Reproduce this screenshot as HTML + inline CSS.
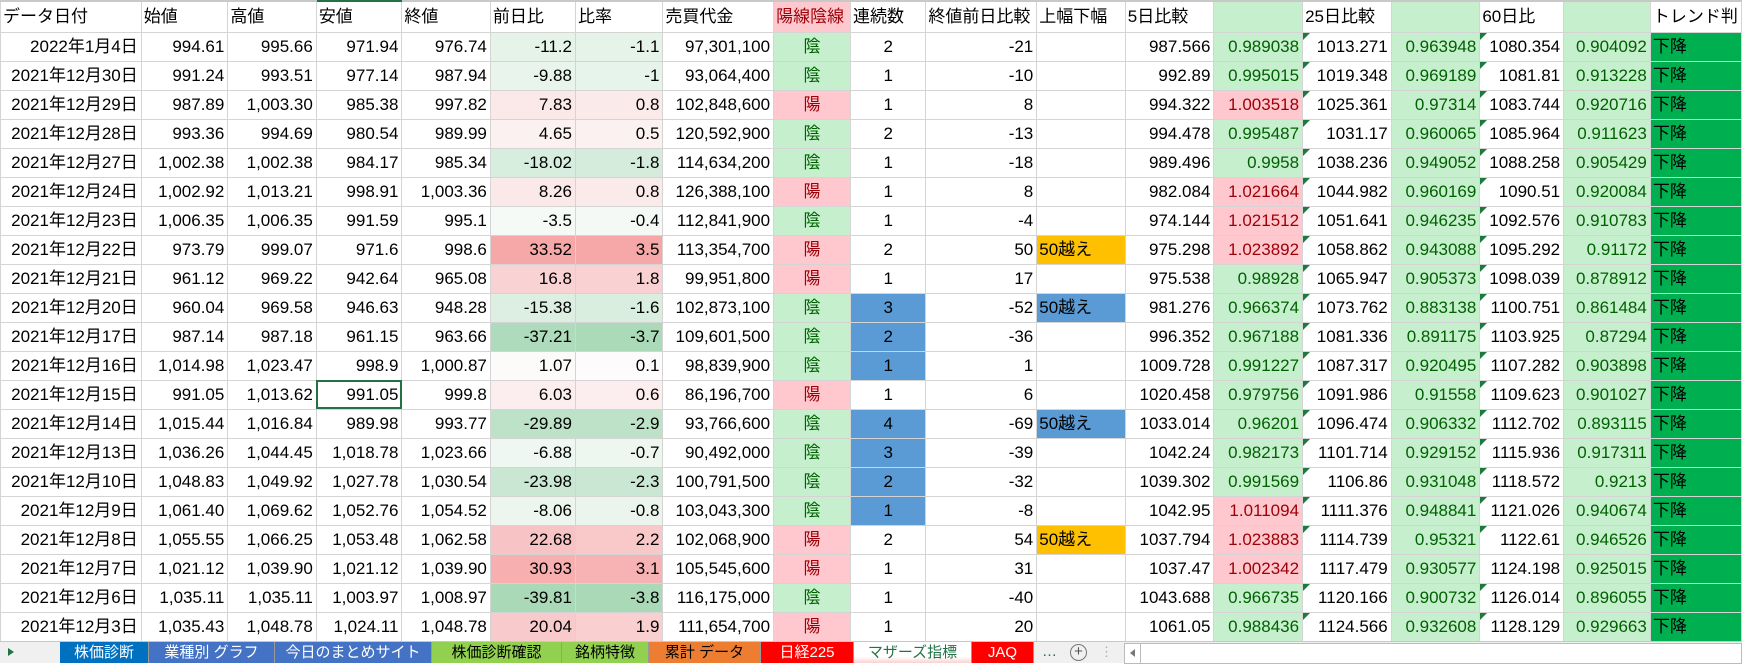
<!DOCTYPE html>
<html><head><meta charset="utf-8"><style>
*{margin:0;padding:0;box-sizing:border-box}
body{width:1742px;height:663px;overflow:hidden;background:#fff;font-family:"Liberation Sans","Noto Sans CJK JP",sans-serif;font-size:17px;color:#000;position:relative}
table{border-collapse:collapse;table-layout:fixed;position:absolute;left:0;top:0}
td{border:1px solid #d4d4d4;height:29px;white-space:nowrap;overflow:hidden;text-align:right;padding:0 3px;position:relative;line-height:27px}
tr.h td{height:31px;text-align:left;padding-left:2px;border-top:2px solid #c8c8c8}
.c{text-align:center}.l{text-align:left;padding-left:2px}
.n{background:#c6efce;color:#006100}
.y{background:#ffc7ce;color:#9c0006}
.b{background:#5b9bd5}
.o{background:#ffc000}
.s{background:#00b050;text-align:left;padding-left:2px}
.t::before{content:"";position:absolute;left:0;top:0;border-top:7px solid #1b7a3c;border-right:7px solid transparent}
.sel{outline:2px solid #217346;outline-offset:-2px}
#tabs{position:absolute;left:0;top:641px;width:1742px;height:22px;background:#f0f0f0;border-top:1px solid #c8c8c8}
.tab{position:absolute;top:0;height:21px;font-size:15px;line-height:21px;text-align:center;border-right:1px solid #9a9a9a}
</style></head><body>
<table>
<colgroup><col style="width:141px"><col style="width:87px"><col style="width:89px"><col style="width:86px"><col style="width:89px"><col style="width:86px"><col style="width:89px"><col style="width:111px"><col style="width:77px"><col style="width:76px"><col style="width:111px"><col style="width:89px"><col style="width:89px"><col style="width:89px"><col style="width:89px"><col style="width:89px"><col style="width:84px"><col style="width:87px"><col style="width:84px"></colgroup>
<tr class="h"><td>データ日付</td><td>始値</td><td>高値</td><td style="border-top:2px solid #217346">安値</td><td>終値</td><td>前日比</td><td>比率</td><td>売買代金</td><td class="y">陽線陰線</td><td>連続数</td><td>終値前日比較</td><td>上幅下幅</td><td>5日比較</td><td class="n"></td><td>25日比較</td><td class="n"></td><td>60日比</td><td class="n"></td><td>トレンド判</td></tr>
<tr><td>2022年1月4日</td><td>994.61</td><td>995.66</td><td>971.94</td><td>976.74</td><td style="background:rgb(229,243,233)">-11.2</td><td style="background:rgb(229,243,233)">-1.1</td><td>97,301,100</td><td class="c n">陰</td><td class="c">2</td><td>-21</td><td></td><td>987.566</td><td class="n">0.989038</td><td class="t">1013.271</td><td class="n">0.963948</td><td class="t">1080.354</td><td class="n">0.904092</td><td class="s">下降</td></tr>
<tr><td>2021年12月30日</td><td>991.24</td><td>993.51</td><td>977.14</td><td>987.94</td><td style="background:rgb(232,244,236)">-9.88</td><td style="background:rgb(231,244,235)">-1</td><td>93,064,400</td><td class="c n">陰</td><td class="c">1</td><td>-10</td><td></td><td>992.89</td><td class="n">0.995015</td><td class="t">1019.348</td><td class="n">0.969189</td><td class="t">1081.81</td><td class="n">0.913228</td><td class="s">下降</td></tr>
<tr><td>2021年12月29日</td><td>987.89</td><td>1,003.30</td><td>985.38</td><td>997.82</td><td style="background:rgb(251,233,233)">7.83</td><td style="background:rgb(251,234,234)">0.8</td><td>102,848,600</td><td class="c y">陽</td><td class="c">1</td><td>8</td><td></td><td>994.322</td><td class="y">1.003518</td><td class="t">1025.361</td><td class="n">0.97314</td><td class="t">1083.744</td><td class="n">0.920716</td><td class="s">下降</td></tr>
<tr><td>2021年12月28日</td><td>993.36</td><td>994.69</td><td>980.54</td><td>989.99</td><td style="background:rgb(252,241,241)">4.65</td><td style="background:rgb(252,241,241)">0.5</td><td>120,592,900</td><td class="c n">陰</td><td class="c">2</td><td>-13</td><td></td><td>994.478</td><td class="n">0.995487</td><td class="t">1031.17</td><td class="n">0.960065</td><td class="t">1085.964</td><td class="n">0.911623</td><td class="s">下降</td></tr>
<tr><td>2021年12月27日</td><td>1,002.38</td><td>1,002.38</td><td>984.17</td><td>985.34</td><td style="background:rgb(215,237,221)">-18.02</td><td style="background:rgb(213,236,220)">-1.8</td><td>114,634,200</td><td class="c n">陰</td><td class="c">1</td><td>-18</td><td></td><td>989.496</td><td class="n">0.9958</td><td class="t">1038.236</td><td class="n">0.949052</td><td class="t">1088.258</td><td class="n">0.905429</td><td class="s">下降</td></tr>
<tr><td>2021年12月24日</td><td>1,002.92</td><td>1,013.21</td><td>998.91</td><td>1,003.36</td><td style="background:rgb(251,232,232)">8.26</td><td style="background:rgb(251,234,234)">0.8</td><td>126,388,100</td><td class="c y">陽</td><td class="c">1</td><td>8</td><td></td><td>982.084</td><td class="y">1.021664</td><td class="t">1044.982</td><td class="n">0.960169</td><td class="t">1090.51</td><td class="n">0.920084</td><td class="s">下降</td></tr>
<tr><td>2021年12月23日</td><td>1,006.35</td><td>1,006.35</td><td>991.59</td><td>995.1</td><td style="background:rgb(246,250,247)">-3.5</td><td style="background:rgb(244,249,246)">-0.4</td><td>112,841,900</td><td class="c n">陰</td><td class="c">1</td><td>-4</td><td></td><td>974.144</td><td class="y">1.021512</td><td class="t">1051.641</td><td class="n">0.946235</td><td class="t">1092.576</td><td class="n">0.910783</td><td class="s">下降</td></tr>
<tr><td>2021年12月22日</td><td>973.79</td><td>999.07</td><td>971.6</td><td>998.6</td><td style="background:rgb(246,168,169)">33.52</td><td style="background:rgb(246,168,169)">3.5</td><td>113,354,700</td><td class="c y">陽</td><td class="c">2</td><td>50</td><td class="l o">50越え</td><td>975.298</td><td class="y">1.023892</td><td class="t">1058.862</td><td class="n">0.943088</td><td class="t">1095.292</td><td class="n">0.91172</td><td class="s">下降</td></tr>
<tr><td>2021年12月21日</td><td>961.12</td><td>969.22</td><td>942.64</td><td>965.08</td><td style="background:rgb(249,210,211)">16.8</td><td style="background:rgb(249,209,210)">1.8</td><td>99,951,800</td><td class="c y">陽</td><td class="c">1</td><td>17</td><td></td><td>975.538</td><td class="n">0.98928</td><td class="t">1065.947</td><td class="n">0.905373</td><td class="t">1098.039</td><td class="n">0.878912</td><td class="s">下降</td></tr>
<tr><td>2021年12月20日</td><td>960.04</td><td>969.58</td><td>946.63</td><td>948.28</td><td style="background:rgb(221,239,226)">-15.38</td><td style="background:rgb(218,238,224)">-1.6</td><td>102,873,100</td><td class="c n">陰</td><td class="c b">3</td><td>-52</td><td class="l b">50越え</td><td>981.276</td><td class="n">0.966374</td><td class="t">1073.762</td><td class="n">0.883138</td><td class="t">1100.751</td><td class="n">0.861484</td><td class="s">下降</td></tr>
<tr><td>2021年12月17日</td><td>987.14</td><td>987.18</td><td>961.15</td><td>963.66</td><td style="background:rgb(174,219,188)">-37.21</td><td style="background:rgb(171,218,185)">-3.7</td><td>109,601,500</td><td class="c n">陰</td><td class="c b">2</td><td>-36</td><td></td><td>996.352</td><td class="n">0.967188</td><td class="t">1081.336</td><td class="n">0.891175</td><td class="t">1103.925</td><td class="n">0.87294</td><td class="s">下降</td></tr>
<tr><td>2021年12月16日</td><td>1,014.98</td><td>1,023.47</td><td>998.9</td><td>1,000.87</td><td style="background:rgb(253,250,250)">1.07</td><td style="background:rgb(253,251,251)">0.1</td><td>98,839,900</td><td class="c n">陰</td><td class="c b">1</td><td>1</td><td></td><td>1009.728</td><td class="n">0.991227</td><td class="t">1087.317</td><td class="n">0.920495</td><td class="t">1107.282</td><td class="n">0.903898</td><td class="s">下降</td></tr>
<tr><td>2021年12月15日</td><td>991.05</td><td>1,013.62</td><td class="sel">991.05</td><td>999.8</td><td style="background:rgb(252,238,238)">6.03</td><td style="background:rgb(252,238,238)">0.6</td><td>86,196,700</td><td class="c y">陽</td><td class="c">1</td><td>6</td><td></td><td>1020.458</td><td class="n">0.979756</td><td class="t">1091.986</td><td class="n">0.91558</td><td class="t">1109.623</td><td class="n">0.901027</td><td class="s">下降</td></tr>
<tr><td>2021年12月14日</td><td>1,015.44</td><td>1,016.84</td><td>989.98</td><td>993.77</td><td style="background:rgb(190,226,200)">-29.89</td><td style="background:rgb(189,226,200)">-2.9</td><td>93,766,600</td><td class="c n">陰</td><td class="c b">4</td><td>-69</td><td class="l b">50越え</td><td>1033.014</td><td class="n">0.96201</td><td class="t">1096.474</td><td class="n">0.906332</td><td class="t">1112.702</td><td class="n">0.893115</td><td class="s">下降</td></tr>
<tr><td>2021年12月13日</td><td>1,036.26</td><td>1,044.45</td><td>1,018.78</td><td>1,023.66</td><td style="background:rgb(238,247,241)">-6.88</td><td style="background:rgb(238,246,240)">-0.7</td><td>90,492,000</td><td class="c n">陰</td><td class="c b">3</td><td>-39</td><td></td><td>1042.24</td><td class="n">0.982173</td><td class="t">1101.714</td><td class="n">0.929152</td><td class="t">1115.936</td><td class="n">0.917311</td><td class="s">下降</td></tr>
<tr><td>2021年12月10日</td><td>1,048.83</td><td>1,049.92</td><td>1,027.78</td><td>1,030.54</td><td style="background:rgb(202,231,211)">-23.98</td><td style="background:rgb(202,231,211)">-2.3</td><td>100,791,500</td><td class="c n">陰</td><td class="c b">2</td><td>-32</td><td></td><td>1039.302</td><td class="n">0.991569</td><td class="t">1106.86</td><td class="n">0.931048</td><td class="t">1118.572</td><td class="n">0.9213</td><td class="s">下降</td></tr>
<tr><td>2021年12月9日</td><td>1,061.40</td><td>1,069.62</td><td>1,052.76</td><td>1,054.52</td><td style="background:rgb(236,246,239)">-8.06</td><td style="background:rgb(235,245,238)">-0.8</td><td>103,043,300</td><td class="c n">陰</td><td class="c b">1</td><td>-8</td><td></td><td>1042.95</td><td class="y">1.011094</td><td class="t">1111.376</td><td class="n">0.948841</td><td class="t">1121.026</td><td class="n">0.940674</td><td class="s">下降</td></tr>
<tr><td>2021年12月8日</td><td>1,055.55</td><td>1,066.25</td><td>1,053.48</td><td>1,062.58</td><td style="background:rgb(248,195,196)">22.68</td><td style="background:rgb(249,200,200)">2.2</td><td>102,068,900</td><td class="c y">陽</td><td class="c">2</td><td>54</td><td class="l o">50越え</td><td>1037.794</td><td class="y">1.023883</td><td class="t">1114.739</td><td class="n">0.95321</td><td class="t">1122.61</td><td class="n">0.946526</td><td class="s">下降</td></tr>
<tr><td>2021年12月7日</td><td>1,021.12</td><td>1,039.90</td><td>1,021.12</td><td>1,039.90</td><td style="background:rgb(247,175,175)">30.93</td><td style="background:rgb(247,178,179)">3.1</td><td>105,545,600</td><td class="c y">陽</td><td class="c">1</td><td>31</td><td></td><td>1037.47</td><td class="y">1.002342</td><td>1117.479</td><td class="n">0.930577</td><td>1124.198</td><td class="n">0.925015</td><td class="s">下降</td></tr>
<tr><td>2021年12月6日</td><td>1,035.11</td><td>1,035.11</td><td>1,003.97</td><td>1,008.97</td><td style="background:rgb(169,217,183)">-39.81</td><td style="background:rgb(169,217,183)">-3.8</td><td>116,175,000</td><td class="c n">陰</td><td class="c">1</td><td>-40</td><td></td><td>1043.688</td><td class="n">0.966735</td><td class="t">1120.166</td><td class="n">0.900732</td><td class="t">1126.014</td><td class="n">0.896055</td><td class="s">下降</td></tr>
<tr><td>2021年12月3日</td><td>1,035.43</td><td>1,048.78</td><td>1,024.11</td><td>1,048.78</td><td style="background:rgb(249,202,203)">20.04</td><td style="background:rgb(249,207,207)">1.9</td><td>111,654,700</td><td class="c y">陽</td><td class="c">1</td><td>20</td><td></td><td>1061.05</td><td class="n">0.988436</td><td class="t">1124.566</td><td class="n">0.932608</td><td class="t">1128.129</td><td class="n">0.929663</td><td class="s">下降</td></tr>
</table>
<div id="tabs">
<div style="position:absolute;left:8px;top:6px;border-left:6px solid #217346;border-top:4px solid transparent;border-bottom:4px solid transparent"></div>
<div class="tab" style="left:60px;width:89px;background:#0070c0;color:#fff">株価診断</div>
<div class="tab" style="left:149px;width:126px;background:#4472c4;color:#fff">業種別 グラフ</div>
<div class="tab" style="left:275px;width:157px;background:#4472c4;color:#fff">今日のまとめサイト</div>
<div class="tab" style="left:432px;width:130px;background:#92d050">株価診断確認</div>
<div class="tab" style="left:562px;width:87px;background:#92d050">銘柄特徴</div>
<div class="tab" style="left:649px;width:112px;background:#ed7d31">累計 データ</div>
<div class="tab" style="left:761px;width:93px;background:#ff0000;color:#fff">日経225</div>
<div class="tab" style="left:854px;width:118px;background:linear-gradient(#fff 70%,#fbd0d0);color:#217346">マザーズ指標</div>
<div class="tab" style="left:972px;width:62px;background:#ff0000;color:#fff">JAQ</div>
<div style="position:absolute;left:1042px;top:0;font-size:15px;line-height:20px;color:#217346">…</div>
<div style="position:absolute;left:1070px;top:2px;width:17px;height:17px;border:1px solid #777;border-radius:50%;font-size:15px;line-height:14px;text-align:center;color:#555">+</div>
<div style="position:absolute;left:1100px;top:3px;color:#aaa;font-size:13px;line-height:14px">⋮</div>
<div style="position:absolute;left:1124px;top:1px;width:618px;height:21px;background:#fff;border:1px solid #bbb"></div>
<div style="position:absolute;left:1130px;top:7px;border-right:5px solid #777;border-top:4px solid transparent;border-bottom:4px solid transparent"></div>
<div style="position:absolute;left:1140px;top:1px;width:1px;height:20px;background:#bbb"></div>
</div>
</body></html>
